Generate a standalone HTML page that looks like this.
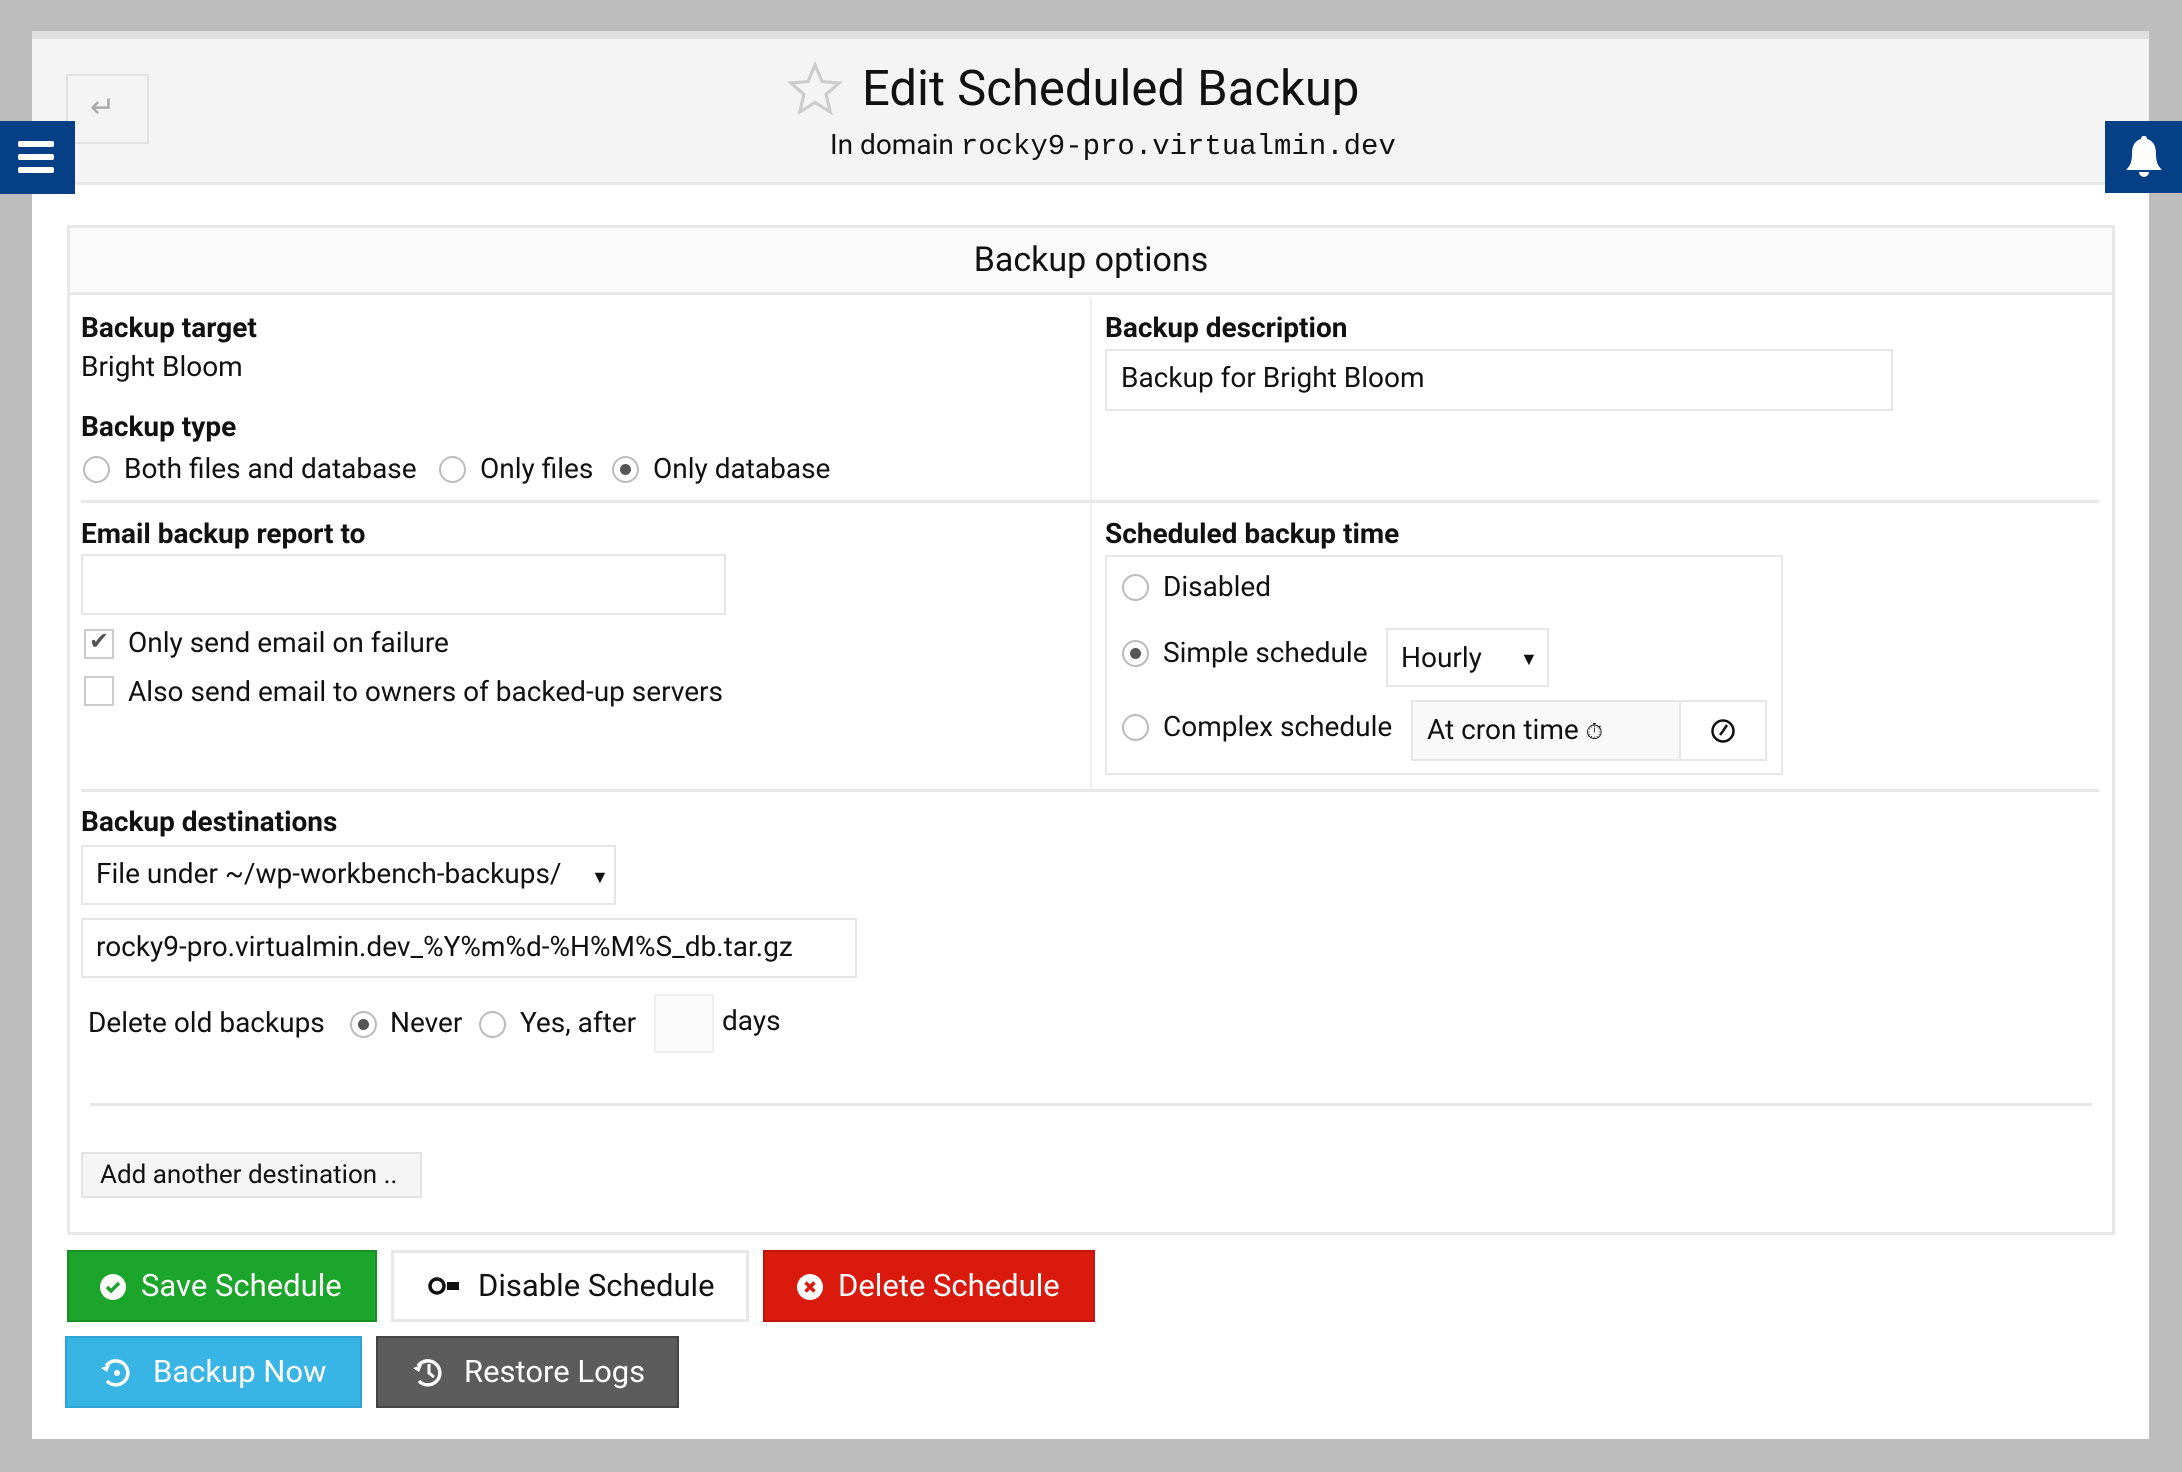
<!DOCTYPE html>
<html><head><meta charset="utf-8"><style>
*{box-sizing:border-box;margin:0;padding:0}
body{width:2182px;height:1472px;background:#bdbdbd;position:relative;overflow:hidden;font-family:"Roboto","Liberation Sans",sans-serif;color:#111}
.a{position:absolute}
.t{position:absolute;font-size:28px;line-height:34px;white-space:nowrap}
.b{font-weight:bold}
.inp{position:absolute;border:2px solid #e6e6e6;background:#fff}
.rad{position:absolute;width:27px;height:27px;border:2px solid #bbb;border-radius:50%;background:#fff}
.rad.on::after{content:"";position:absolute;left:6px;top:6px;width:11px;height:11px;border-radius:50%;background:#555}
.hl{position:absolute;height:3px;background:#e8e8e8}
.btn{position:absolute;font-size:31px;line-height:70px;white-space:nowrap;color:#fff}
</style></head><body>
<div class="a" style="left:32px;top:31px;width:2117px;height:1408px;background:#fff"></div>
<div class="a" style="left:32px;top:31px;width:2117px;height:8px;background:#dedede"></div>
<div class="a" style="left:32px;top:39px;width:2117px;height:146px;background:#f4f4f4;border-bottom:3px solid #e8e8e8"></div>
<div class="a" style="left:66px;top:74px;width:83px;height:70px;border:2px solid #e2e2e2"></div>
<div class="t" style="left:90px;top:91px;color:#aaa;font-size:30px">↵</div>
<div class="a" style="left:0;top:121px;width:75px;height:73px;background:#053f85"></div>
<div class="a" style="left:18px;top:141px;width:36px;height:6px;background:#fff;border-radius:2px"></div>
<div class="a" style="left:18px;top:154px;width:36px;height:6px;background:#fff;border-radius:2px"></div>
<div class="a" style="left:18px;top:167px;width:36px;height:6px;background:#fff;border-radius:2px"></div>
<div class="a" style="left:2105px;top:121px;width:77px;height:72px;background:#053f85"></div>
<svg class="a" style="left:2124px;top:134px" width="40" height="46" viewBox="0 0 40 46"><path d="M20 2c2 0 3 1 3 3 7 2 9 8 9 15 0 8 2 12 6 16H2c4-4 6-8 6-16 0-7 2-13 9-15 0-2 1-3 3-3z" fill="#fff"/><path d="M15 38a5 5 0 0 0 10 0z" fill="#fff"/></svg>
<svg class="a" style="left:786px;top:60px" width="58" height="58" viewBox="0 0 24 24"><path d="M12 2l2.9 6.9 7.1.6-5.4 4.7 1.7 7.3L12 17.6 5.7 21.5l1.7-7.3L2 9.5l7.1-.6z" fill="none" stroke="#ccc" stroke-width="1.3"/></svg>
<div class="t" style="left:862px;top:60px;font-size:49px;line-height:58px;width:512px">Edit Scheduled Backup</div>
<div class="t" style="left:830px;top:128px;font-size:28px">In domain <span style="font-family:'Liberation Mono',monospace;font-size:29px">rocky9-pro.virtualmin.dev</span></div>

<div class="a" style="left:67px;top:225px;width:2048px;height:1010px;border:3px solid #e8e8e8"></div>
<div class="a" style="left:70px;top:228px;width:2042px;height:67px;background:#fafafa;border-bottom:3px solid #e8e8e8"></div>
<div class="t" style="left:0;width:2182px;text-align:center;top:240px;font-size:34px;line-height:40px">Backup options</div>
<div class="a" style="left:1090px;top:298px;width:2px;height:490px;background:#eee"></div>

<div class="t b" style="left:81px;top:311px">Backup target</div>
<div class="t" style="left:81px;top:350px">Bright Bloom</div>
<div class="t b" style="left:81px;top:410px">Backup type</div>
<div class="rad" style="left:83px;top:456px"></div>
<div class="t" style="left:124px;top:452px">Both files and database</div>
<div class="rad" style="left:439px;top:456px"></div>
<div class="t" style="left:480px;top:452px">Only files</div>
<div class="rad on" style="left:612px;top:456px"></div>
<div class="t" style="left:653px;top:452px">Only database</div>

<div class="t b" style="left:1105px;top:311px">Backup description</div>
<div class="inp" style="left:1105px;top:349px;width:788px;height:62px"></div>
<div class="t" style="left:1121px;top:361px">Backup for Bright Bloom</div>

<div class="hl" style="left:81px;top:500px;width:2018px"></div>

<div class="t b" style="left:81px;top:517px">Email backup report to</div>
<div class="inp" style="left:81px;top:554px;width:645px;height:61px"></div>
<div class="a" style="left:84px;top:629px;width:30px;height:30px;border:2px solid #ccc"></div>
<div class="t" style="left:89px;top:624px;font-size:24px;color:#555">✔</div>
<div class="t" style="left:128px;top:626px">Only send email on failure</div>
<div class="a" style="left:84px;top:676px;width:30px;height:30px;border:2px solid #ccc"></div>
<div class="t" style="left:128px;top:675px">Also send email to owners of backed-up servers</div>

<div class="t b" style="left:1105px;top:517px">Scheduled backup time</div>
<div class="a" style="left:1105px;top:555px;width:678px;height:220px;border:2px solid #e8e8e8"></div>
<div class="rad" style="left:1122px;top:574px"></div>
<div class="t" style="left:1163px;top:570px">Disabled</div>
<div class="rad on" style="left:1122px;top:640px"></div>
<div class="t" style="left:1163px;top:636px">Simple schedule</div>
<div class="inp" style="left:1386px;top:628px;width:163px;height:59px"></div>
<div class="t" style="left:1401px;top:641px">Hourly</div>
<div class="t" style="left:1520px;top:643px;font-size:18px">▼</div>
<div class="rad" style="left:1122px;top:714px"></div>
<div class="t" style="left:1163px;top:710px">Complex schedule</div>
<div class="inp" style="left:1411px;top:700px;width:270px;height:61px;background:#f9f9f9"></div>
<div class="t" style="left:1427px;top:713px">At cron time <span style="font-size:22px">⏱</span></div>
<div class="inp" style="left:1679px;top:700px;width:88px;height:61px"></div>
<svg class="a" style="left:1710px;top:718px" width="26" height="26" viewBox="0 0 26 26"><circle cx="13" cy="13" r="10.5" fill="none" stroke="#111" stroke-width="2.5"/><path d="M13 13l4-6M13 13l-3 4" stroke="#111" stroke-width="2.5"/></svg>

<div class="hl" style="left:81px;top:789px;width:2018px"></div>

<div class="t b" style="left:81px;top:805px">Backup destinations</div>
<div class="inp" style="left:81px;top:845px;width:535px;height:60px"></div>
<div class="t" style="left:96px;top:857px">File under ~/wp-workbench-backups/</div>
<div class="t" style="left:591px;top:861px;font-size:18px">▼</div>
<div class="inp" style="left:81px;top:918px;width:776px;height:60px"></div>
<div class="t" style="left:96px;top:930px">rocky9-pro.virtualmin.dev_%Y%m%d-%H%M%S_db.tar.gz</div>
<div class="t" style="left:88px;top:1006px">Delete old backups</div>
<div class="rad on" style="left:350px;top:1011px"></div>
<div class="t" style="left:390px;top:1006px">Never</div>
<div class="rad" style="left:479px;top:1011px"></div>
<div class="t" style="left:520px;top:1006px">Yes, after</div>
<div class="inp" style="left:654px;top:994px;width:60px;height:59px;background:#fbfbfb;border-color:#eee"></div>
<div class="t" style="left:722px;top:1004px">days</div>

<div class="hl" style="left:90px;top:1103px;width:2002px"></div>
<div class="a" style="left:81px;top:1152px;width:341px;height:46px;background:#f5f5f5;border:2px solid #e3e3e3"></div>
<div class="t" style="left:100px;top:1158px;font-size:26px">Add another destination ..</div>

<div class="btn" style="left:67px;top:1250px;width:310px;height:72px;background:#1ba52a;border:2px solid #178f24;line-height:68px;padding-left:100px"></div>
<svg class="a" style="left:100px;top:1274px" width="26" height="26" viewBox="0 0 26 26"><circle cx="13" cy="13" r="13" fill="#fff"/><path d="M7 13l4 4 8-8" fill="none" stroke="#1ba52a" stroke-width="3.5"/></svg>
<div class="btn" style="left:141px;top:1251px">Save Schedule</div>
<div class="a" style="left:391px;top:1250px;width:358px;height:72px;background:#fff;border:3px solid #e8e8e8"></div>
<svg class="a" style="left:427px;top:1276px" width="36" height="20" viewBox="0 0 36 20"><circle cx="10" cy="10" r="7" fill="none" stroke="#111" stroke-width="3.5"/><rect x="20" y="6" width="12" height="8" fill="#111"/></svg>
<div class="btn" style="left:478px;top:1251px;color:#111">Disable Schedule</div>
<div class="a" style="left:763px;top:1250px;width:332px;height:72px;background:#d91a0d;border:2px solid #c0160c"></div>
<svg class="a" style="left:797px;top:1274px" width="26" height="26" viewBox="0 0 26 26"><circle cx="13" cy="13" r="13" fill="#fff"/><path d="M8.5 8.5l9 9M17.5 8.5l-9 9" stroke="#d91a0d" stroke-width="3.5"/></svg>
<div class="btn" style="left:838px;top:1251px">Delete Schedule</div>

<div class="a" style="left:65px;top:1336px;width:297px;height:72px;background:#38b4e5;border:2px solid #2ea2d3"></div>
<svg class="a" style="left:98px;top:1354px" width="36" height="36" viewBox="0 0 36 36"><path d="M8 12A12 12 0 1 1 9 27" fill="none" stroke="#fff" stroke-width="3.5"/><path d="M3 14l6 4 3-7z" fill="#fff"/><circle cx="19" cy="19" r="3" fill="#fff"/></svg>
<div class="btn" style="left:153px;top:1337px">Backup Now</div>
<div class="a" style="left:376px;top:1336px;width:303px;height:72px;background:#5c5c5c;border:2px solid #444"></div>
<svg class="a" style="left:410px;top:1354px" width="36" height="36" viewBox="0 0 36 36"><path d="M8 12A12 12 0 1 1 9 27" fill="none" stroke="#fff" stroke-width="3.5"/><path d="M3 14l6 4 3-7z" fill="#fff"/><path d="M19 10v9l5 4" fill="none" stroke="#fff" stroke-width="3"/></svg>
<div class="btn" style="left:464px;top:1337px">Restore Logs</div>
</body></html>
